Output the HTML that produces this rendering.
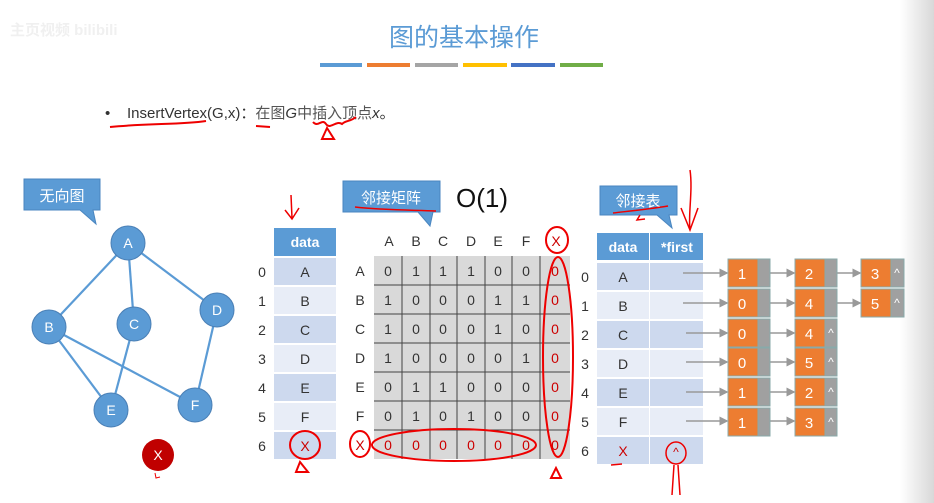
<!DOCTYPE html>
<html><head><meta charset="utf-8"><style>
html,body{margin:0;padding:0;background:#fff}
svg{display:block;font-family:"Liberation Sans","Noto Sans CJK SC",sans-serif}
</style></head><body>
<svg width="934" height="503" viewBox="0 0 934 503" xmlns="http://www.w3.org/2000/svg">
<defs>
<linearGradient id="rg" x1="0" x2="1" y1="0" y2="0"><stop offset="0" stop-color="#fff"/><stop offset="1" stop-color="#d8d8d8"/></linearGradient>
<marker id="ar" markerWidth="6" markerHeight="6" refX="5" refY="3" orient="auto"><path d="M0,0 L6,3 L0,6 z" fill="#999"/></marker>
</defs>
<rect x="900" y="0" width="34" height="503" fill="url(#rg)"/>
<text x="10" y="35" font-size="15" fill="#f0f0f0" font-weight="bold">主页视频 bilibili</text>
<text x="464" y="46" font-size="25" fill="#5b9bd5" text-anchor="middle" font-family="Noto Sans CJK SC,sans-serif">图的基本操作</text>
<g>
<rect x="320" y="63" width="42" height="4" fill="#5b9bd5"/><rect x="367" y="63" width="43" height="4" fill="#ed7d31"/>
<rect x="415" y="63" width="43" height="4" fill="#a5a5a5"/><rect x="463" y="63" width="44" height="4" fill="#ffc000"/>
<rect x="511" y="63" width="44" height="4" fill="#4472c4"/><rect x="560" y="63" width="43" height="4" fill="#70ad47"/>
</g>
<text x="105" y="118" font-size="15" fill="#333">•</text>
<text x="127" y="118" font-size="15" fill="#333">InsertVertex(G,x)：<tspan fill="#555" font-family="Noto Sans CJK SC,sans-serif">在图</tspan><tspan font-style="italic">G</tspan><tspan fill="#555" font-family="Noto Sans CJK SC,sans-serif">中插入顶点</tspan><tspan font-style="italic">x</tspan>。</text>
<g stroke="#e00" stroke-width="2" fill="none">
<path d="M110,127 C150,123 180,125 206,121"/><path d="M256,126 L270,127"/>
<path d="M313,122 C318,128 322,118 326,124 C330,130 336,120 342,124 C346,120 350,122 356,117"/>
<path d="M327,128 L322,139 L334,139 z"/>
</g>
<path d="M24,179 H100 V210 H93 L96,224 L80,210 H24 z" fill="#5b9bd5" stroke="#4a86c0"/>
<text x="62" y="201" font-size="15" fill="#fff" text-anchor="middle" font-family="Noto Sans CJK SC,sans-serif">无向图</text>
<g stroke="#5b9bd5" stroke-width="2.2">
<line x1="128" y1="243" x2="49" y2="327"/><line x1="128" y1="243" x2="134" y2="324"/><line x1="128" y1="243" x2="217" y2="310"/>
<line x1="49" y1="327" x2="111" y2="410"/><line x1="49" y1="327" x2="195" y2="405"/><line x1="134" y1="324" x2="111" y2="410"/><line x1="217" y1="310" x2="195" y2="405"/>
</g>
<g fill="#5b9bd5" stroke="#4a7fb5" stroke-width="1">
<circle cx="128" cy="243" r="17"/><circle cx="49" cy="327" r="17"/><circle cx="134" cy="324" r="17"/><circle cx="217" cy="310" r="17"/><circle cx="111" cy="410" r="17"/><circle cx="195" cy="405" r="17"/>
</g>
<circle cx="158" cy="455" r="16" fill="#c00000"/>
<g fill="#fff" font-size="14" text-anchor="middle">
<text x="128" y="248">A</text><text x="49" y="332">B</text><text x="134" y="329">C</text><text x="217" y="315">D</text><text x="111" y="415">E</text><text x="195" y="410">F</text><text x="158" y="460">X</text>
</g>
<path d="M155,473 L156,478 L160,477" stroke="#e00" fill="none"/>
<path d="M291,195 L292,218 M285,210 L292,219 L299,208" stroke="#e00" stroke-width="1.5" fill="none"/>
<rect x="274" y="228" width="62" height="28" fill="#5b9bd5"/>
<text x="305" y="247" font-size="14" fill="#fff" font-weight="bold" text-anchor="middle">data</text>
<g font-size="14" text-anchor="middle" fill="#333">
<rect x="274" y="258" width="62" height="27" fill="#cdd9ee"/><text x="305" y="277">A</text>
<rect x="274" y="287" width="62" height="27" fill="#e8edf7"/><text x="305" y="306">B</text>
<rect x="274" y="316" width="62" height="27" fill="#cdd9ee"/><text x="305" y="335">C</text>
<rect x="274" y="345" width="62" height="27" fill="#e8edf7"/><text x="305" y="364">D</text>
<rect x="274" y="374" width="62" height="27" fill="#cdd9ee"/><text x="305" y="393">E</text>
<rect x="274" y="403" width="62" height="27" fill="#e8edf7"/><text x="305" y="422">F</text>
<rect x="274" y="432" width="62" height="27" fill="#cdd9ee"/><text x="305" y="451" fill="#c00">X</text>
<text x="262" y="277">0</text><text x="262" y="306">1</text><text x="262" y="335">2</text><text x="262" y="364">3</text><text x="262" y="393">4</text><text x="262" y="422">5</text><text x="262" y="451">6</text>
</g>
<ellipse cx="305" cy="445" rx="15" ry="14" stroke="#e00" stroke-width="2" fill="none"/>
<path d="M300,462 L296,472 L308,472 z" stroke="#e00" stroke-width="2" fill="none"/>
<path d="M343,181 H440 V212 H433 L430,226 L418,212 H343 z" fill="#5b9bd5" stroke="#4a86c0"/>
<text x="391" y="203" font-size="15" fill="#fff" text-anchor="middle" font-family="Noto Sans CJK SC,sans-serif">邻接矩阵</text>
<path d="M355,207 C380,210 410,210 436,211" stroke="#e00" stroke-width="1.5" fill="none"/>
<text x="456" y="207" font-size="26" fill="#111">O(1)</text>
<rect x="374" y="256" width="196" height="203" fill="#d9d9d9"/>
<g stroke="#444" stroke-width="1">
<line x1="402" y1="256" x2="402" y2="459"/><line x1="430" y1="256" x2="430" y2="459"/><line x1="457" y1="256" x2="457" y2="459"/><line x1="485" y1="256" x2="485" y2="459"/><line x1="512" y1="256" x2="512" y2="459"/><line x1="540" y1="256" x2="540" y2="459"/>
<line x1="374" y1="285" x2="570" y2="285"/><line x1="374" y1="314" x2="570" y2="314"/><line x1="374" y1="343" x2="570" y2="343"/><line x1="374" y1="372" x2="570" y2="372"/><line x1="374" y1="401" x2="570" y2="401"/><line x1="374" y1="430" x2="570" y2="430"/>
</g>
<g font-size="14" text-anchor="middle" fill="#333">
<text x="389" y="246">A</text><text x="416" y="246">B</text><text x="443" y="246">C</text><text x="471" y="246">D</text><text x="498" y="246">E</text><text x="526" y="246">F</text><text x="556" y="246" fill="#c00">X</text>
<text x="360" y="276">A</text><text x="360" y="305">B</text><text x="360" y="334">C</text><text x="360" y="363">D</text><text x="360" y="392">E</text><text x="360" y="421">F</text><text x="360" y="450" fill="#c00">X</text>
<text x="388" y="276">0</text><text x="416" y="276">1</text><text x="443" y="276">1</text><text x="471" y="276">1</text><text x="498" y="276">0</text><text x="526" y="276">0</text>
<text x="388" y="305">1</text><text x="416" y="305">0</text><text x="443" y="305">0</text><text x="471" y="305">0</text><text x="498" y="305">1</text><text x="526" y="305">1</text>
<text x="388" y="334">1</text><text x="416" y="334">0</text><text x="443" y="334">0</text><text x="471" y="334">0</text><text x="498" y="334">1</text><text x="526" y="334">0</text>
<text x="388" y="363">1</text><text x="416" y="363">0</text><text x="443" y="363">0</text><text x="471" y="363">0</text><text x="498" y="363">0</text><text x="526" y="363">1</text>
<text x="388" y="392">0</text><text x="416" y="392">1</text><text x="443" y="392">1</text><text x="471" y="392">0</text><text x="498" y="392">0</text><text x="526" y="392">0</text>
<text x="388" y="421">0</text><text x="416" y="421">1</text><text x="443" y="421">0</text><text x="471" y="421">1</text><text x="498" y="421">0</text><text x="526" y="421">0</text>
<g fill="#c00"><text x="388" y="450">0</text><text x="416" y="450">0</text><text x="443" y="450">0</text><text x="471" y="450">0</text><text x="498" y="450">0</text><text x="526" y="450">0</text>
<text x="555" y="276">0</text><text x="555" y="305">0</text><text x="555" y="334">0</text><text x="555" y="363">0</text><text x="555" y="392">0</text><text x="555" y="421">0</text><text x="555" y="450">0</text></g>
<text x="585" y="282">0</text><text x="585" y="311">1</text><text x="585" y="340">2</text><text x="585" y="369">3</text><text x="585" y="398">4</text><text x="585" y="427">5</text><text x="585" y="456">6</text>
</g>
<g stroke="#e00" stroke-width="2" fill="none">
<ellipse cx="557" cy="240" rx="11" ry="13"/>
<ellipse cx="558" cy="357" rx="15" ry="100"/>
<ellipse cx="454" cy="445" rx="82" ry="16"/>
<ellipse cx="360" cy="444" rx="10" ry="13"/>
<path d="M556,468 L551,478 L561,478 z"/>
</g>
<path d="M600,186 H677 V215 H669 L672,228 L657,215 H600 z" fill="#5b9bd5" stroke="#4a86c0"/>
<text x="638" y="206" font-size="15" fill="#fff" text-anchor="middle" font-family="Noto Sans CJK SC,sans-serif">邻接表</text>
<path d="M613,213 C630,211 650,209 668,206 M640,215 L637,220 L645,219" stroke="#e00" stroke-width="1.5" fill="none"/>
<path d="M690,170 C693,190 688,215 690,230 M681,208 L690,230 L698,208" stroke="#e00" stroke-width="1.5" fill="none"/>
<rect x="597" y="233" width="52" height="27" fill="#5b9bd5"/><rect x="650" y="233" width="53" height="27" fill="#5b9bd5"/>
<text x="623" y="252" font-size="14" fill="#fff" font-weight="bold" text-anchor="middle">data</text>
<text x="677" y="252" font-size="14" fill="#fff" font-weight="bold" text-anchor="middle">*first</text>
<g font-size="14" text-anchor="middle" fill="#333">
<g fill="#cdd9ee"><rect x="597" y="263" width="52" height="27"/><rect x="650" y="263" width="53" height="27"/><rect x="597" y="321" width="52" height="27"/><rect x="650" y="321" width="53" height="27"/><rect x="597" y="379" width="52" height="27"/><rect x="650" y="379" width="53" height="27"/><rect x="597" y="437" width="52" height="27"/><rect x="650" y="437" width="53" height="27"/></g>
<g fill="#e8edf7"><rect x="597" y="292" width="52" height="27"/><rect x="650" y="292" width="53" height="27"/><rect x="597" y="350" width="52" height="27"/><rect x="650" y="350" width="53" height="27"/><rect x="597" y="408" width="52" height="27"/><rect x="650" y="408" width="53" height="27"/></g>
<text x="623" y="282">A</text><text x="623" y="311">B</text><text x="623" y="340">C</text><text x="623" y="369">D</text><text x="623" y="398">E</text><text x="623" y="427">F</text><text x="623" y="456" fill="#c00">X</text>
<text x="676" y="456" fill="#c00" font-size="12">^</text>
</g>
<g stroke="#e00" stroke-width="1.5" fill="none">
<ellipse cx="676" cy="453" rx="10" ry="11"/><path d="M611,465 L622,464 M674,465 L672,495 M678,465 L680,495"/>
</g>
<g stroke="#999" stroke-width="1.5" marker-end="url(#ar)">
<line x1="683" y1="273" x2="727" y2="273"/><line x1="683" y1="303" x2="727" y2="303"/><line x1="686" y1="333" x2="727" y2="333"/><line x1="686" y1="362" x2="727" y2="362"/><line x1="686" y1="392" x2="727" y2="392"/><line x1="686" y1="421" x2="727" y2="421"/>
<line x1="770" y1="273" x2="794" y2="273"/><line x1="770" y1="303" x2="794" y2="303"/><line x1="770" y1="333" x2="794" y2="333"/><line x1="770" y1="362" x2="794" y2="362"/><line x1="770" y1="392" x2="794" y2="392"/><line x1="770" y1="421" x2="794" y2="421"/>
<line x1="837" y1="273" x2="860" y2="273"/><line x1="837" y1="303" x2="860" y2="303"/>
</g>
<g font-size="15" fill="#fff" text-anchor="middle">
<rect x="728" y="259" width="30" height="28" fill="#ed7d31" stroke="#8aa"/><rect x="758" y="259" width="12" height="28" fill="#a0a0a0" stroke="#8aa"/><text x="742" y="279">1</text>
<rect x="795" y="259" width="30" height="28" fill="#ed7d31" stroke="#8aa"/><rect x="825" y="259" width="12" height="28" fill="#a0a0a0" stroke="#8aa"/><text x="809" y="279">2</text>
<rect x="861" y="259" width="30" height="28" fill="#ed7d31" stroke="#8aa"/><rect x="891" y="259" width="13" height="28" fill="#a0a0a0" stroke="#8aa"/><text x="875" y="279">3</text><text x="897" y="277" font-size="12">^</text>
<rect x="728" y="289" width="30" height="28" fill="#ed7d31" stroke="#8aa"/><rect x="758" y="289" width="12" height="28" fill="#a0a0a0" stroke="#8aa"/><text x="742" y="309">0</text>
<rect x="795" y="289" width="30" height="28" fill="#ed7d31" stroke="#8aa"/><rect x="825" y="289" width="12" height="28" fill="#a0a0a0" stroke="#8aa"/><text x="809" y="309">4</text>
<rect x="861" y="289" width="30" height="28" fill="#ed7d31" stroke="#8aa"/><rect x="891" y="289" width="13" height="28" fill="#a0a0a0" stroke="#8aa"/><text x="875" y="309">5</text><text x="897" y="307" font-size="12">^</text>
<rect x="728" y="319" width="30" height="28" fill="#ed7d31" stroke="#8aa"/><rect x="758" y="319" width="12" height="28" fill="#a0a0a0" stroke="#8aa"/><text x="742" y="339">0</text>
<rect x="795" y="319" width="30" height="28" fill="#ed7d31" stroke="#8aa"/><rect x="825" y="319" width="12" height="28" fill="#a0a0a0" stroke="#8aa"/><text x="809" y="339">4</text><text x="831" y="337" font-size="12">^</text>
<rect x="728" y="348" width="30" height="28" fill="#ed7d31" stroke="#8aa"/><rect x="758" y="348" width="12" height="28" fill="#a0a0a0" stroke="#8aa"/><text x="742" y="368">0</text>
<rect x="795" y="348" width="30" height="28" fill="#ed7d31" stroke="#8aa"/><rect x="825" y="348" width="12" height="28" fill="#a0a0a0" stroke="#8aa"/><text x="809" y="368">5</text><text x="831" y="366" font-size="12">^</text>
<rect x="728" y="378" width="30" height="28" fill="#ed7d31" stroke="#8aa"/><rect x="758" y="378" width="12" height="28" fill="#a0a0a0" stroke="#8aa"/><text x="742" y="398">1</text>
<rect x="795" y="378" width="30" height="28" fill="#ed7d31" stroke="#8aa"/><rect x="825" y="378" width="12" height="28" fill="#a0a0a0" stroke="#8aa"/><text x="809" y="398">2</text><text x="831" y="396" font-size="12">^</text>
<rect x="728" y="408" width="30" height="28" fill="#ed7d31" stroke="#8aa"/><rect x="758" y="408" width="12" height="28" fill="#a0a0a0" stroke="#8aa"/><text x="742" y="428">1</text>
<rect x="795" y="408" width="30" height="28" fill="#ed7d31" stroke="#8aa"/><rect x="825" y="408" width="12" height="28" fill="#a0a0a0" stroke="#8aa"/><text x="809" y="428">3</text><text x="831" y="426" font-size="12">^</text>
</g>
</svg>
</body></html>
